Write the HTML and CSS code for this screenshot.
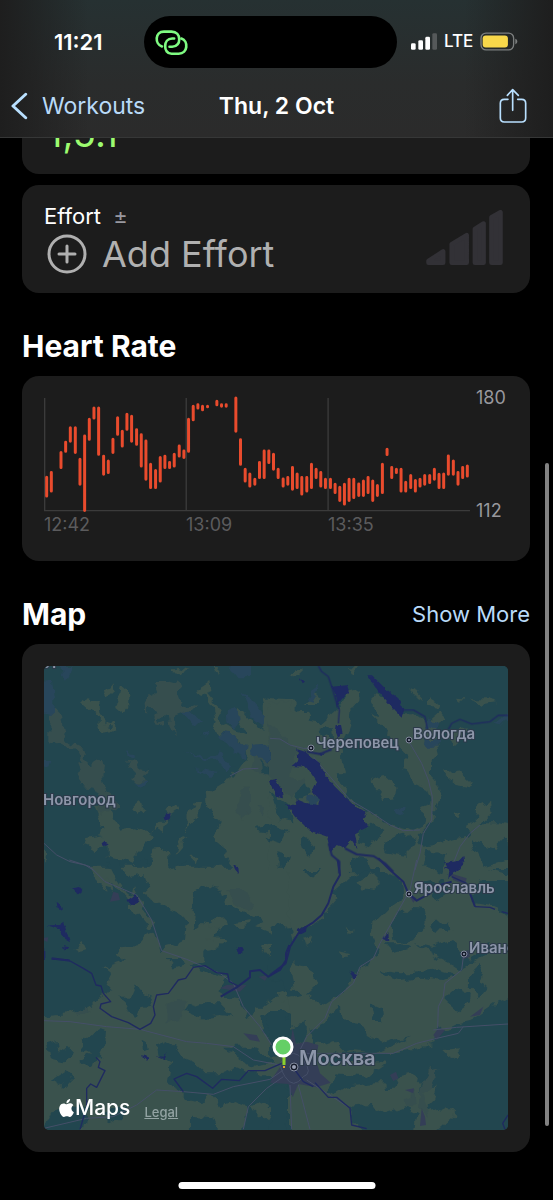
FILE: index.html
```
<!DOCTYPE html>
<html lang="en">

<head>
    <meta charset="UTF-8">
    <meta name="viewport" content="width=device-width, initial-scale=1.0">
    <title>Workout - Thu, 2 Oct</title>
    <link rel="stylesheet" href="styles.css">
</head>

<body>
    <header class="top-bar">
        <div class="status">
            <span class="clock">11:21</span>
            <div class="island">
                <svg class="link-icon" viewBox="466 84 100 80" aria-hidden="true">
                    <path d="M487 136C465 129 465 91 493 91H516C547 91 547 137 518 137H510" />
                    <path d="M524 112H518C490 112 490 158 516 158H538C566 158 568 119 546 112" />
                </svg>
            </div>
            <div class="signals">
                <svg class="bars-icon" viewBox="405 98 78 50" aria-hidden="true">
                    <rect x="405" y="128" width="14" height="20" rx="4" />
                    <rect x="427" y="119" width="14" height="29" rx="4" />
                    <rect x="448" y="109" width="14" height="39" rx="4" />
                    <rect class="off" x="469" y="98" width="14" height="50" rx="4" />
                </svg>
                <span class="lte">LTE</span>
                <svg class="battery-icon" viewBox="610 95 113 56" aria-hidden="true">
                    <rect class="shell" x="613" y="98" width="97" height="50" rx="15" />
                    <rect class="charge" x="618" y="105" width="75" height="36" rx="9" />
                    <path class="cap" d="M715 115C723 118 723 128 715 131Z" />
                </svg>
            </div>
        </div>
        <nav class="nav">
            <button class="back" type="button">
                <svg class="chevron" viewBox="34 278 52 84" aria-hidden="true">
                    <path d="M79 284L40 320L79 356" />
                </svg>
                Workouts
            </button>
            <h1 class="title">Thu, 2 Oct</h1>
            <button class="share" type="button" aria-label="Share">
                <svg class="share-icon" viewBox="670 264 84 108" aria-hidden="true">
                    <path d="M697 298H686Q674 298 674 310V354Q674 366 686 366H738Q750 366 750 354V310Q750 298 738 298H726M711 331V270M695 286L711 269L728 286" />
                </svg>
            </button>
        </nav>
    </header>

    <main class="content">
        <section class="card totals">
            <span class="total-value">1,5.1</span>
        </section>

        <section class="card effort">
            <div>
                <div class="effort-label">Effort <span class="plus-minus">±</span></div>
                <button class="add-effort" type="button">
                    <svg class="plus-icon" viewBox="0 0 40 40" aria-hidden="true">
                        <circle cx="20" cy="20" r="18" />
                        <path d="M20 12V28M12 20H28" />
                    </svg>
                    Add Effort
                </button>
            </div>
            <svg class="effort-icon" viewBox="450 89 231 166" aria-hidden="true">
                <path d="M457 243L501 214V248H457ZM527 192L572 165V248H527ZM597 146L623 130V248H597ZM647 111L674 96V248H647Z" />
            </svg>
        </section>

        <div class="heading">
            <h2>Heart Rate</h2>
        </div>
        <section class="card heart">
            <div class="plot">
                <svg class="chart" viewBox="71 63 1279 351" role="img" aria-label="Heart rate">
                    <path class="grid" d="M73 69V408M498 69V408M924 69V408M71 407H1350" />
                    <path class="beats" d="M79 307V363M93 293V348M122 233V278M136 202V229M150 158V199M165 158V233M179 253V328M193 183V407M207 133V193M221 99V129M235 99V238M250 244V298M264 258V293M278 193V233M292 128V178M306 169V213M320 118V163M334 124V199M349 164V208M363 179V273M377 198V313M391 268V338M406 287V338M420 248V318M434 244V278M448 263V278M462 238V273M477 213V243M491 228V248M505 133V229M519 94V134M533 89V99M547 94V104M562 94V95M590 79V89M604 89V94M618 89V94M647 69V169M661 194V268M675 283V318M689 297V333M704 313V328M718 263V308M732 228V308M746 228V263M760 238V283M774 283V308M789 312V333M803 308V328M817 278V343M831 297V338M845 308V357M860 308V348M874 268V338M888 283V308M902 293V333M916 313V338M931 313V338M945 328V353M959 337V377M973 328V387M987 313V377M1001 313V368M1016 327V362M1030 318V362M1044 308V353M1058 318V377M1072 332V362M1087 268V353M1101 223V239M1115 278V308M1129 283V293M1143 283V348M1157 322V348M1172 302V338M1186 317V348M1200 313V333M1214 302V328M1229 302V323M1243 283V313M1257 298V338M1271 297V338M1285 243V298M1300 258V298M1314 293V328M1328 278V308M1342 273V303" />
                </svg>
                <div class="times"><span>12:42</span><span>13:09</span><span>13:35</span></div>
            </div>
            <div class="range"><span>180</span><span>112</span></div>
        </section>

        <div class="heading">
            <h2>Map</h2>
            <a class="more" href="#map">Show More</a>
        </div>
        <section class="card map-card" id="map">
            <div class="map">
                <svg class="map-drawing" viewBox="0 0 464 464" role="img" aria-label="Workout map">
                    <defs>
                        <filter id="rough" x="0" y="0" width="100%" height="100%" color-interpolation-filters="sRGB">
                            <feTurbulence type="fractalNoise" baseFrequency=".1" numOctaves="2" seed="4" />
                            <feDisplacementMap in="SourceGraphic" scale="11" xChannelSelector="R" yChannelSelector="G" />
                        </filter>
                        <filter id="shore" x="0" y="0" width="100%" height="100%" color-interpolation-filters="sRGB">
                            <feTurbulence type="fractalNoise" baseFrequency=".2" numOctaves="2" seed="9" />
                            <feDisplacementMap in="SourceGraphic" scale="4" xChannelSelector="R" yChannelSelector="G" />
                        </filter>
                    </defs>

                    <!-- forest and fields -->
                    <g filter="url(#rough)">
                        <rect class="forest" x="-20" y="-20" width="504" height="504" />
                        <g transform="scale(.33333) translate(-72 582)">
                            <path class="field" d="M50 20H830V850H50Z" />
                            <path class="forest" d="M40 0H130L205 20 230 60 280 75 310 95 330 125V150L365 175 390 205 410 185 412 210 375 225 345 262 300 265 290 285 320 300 250 325 275 345 262 370 280 390 240 410 215 440 180 450 150 462 110 465 40 475ZM260 0H290L330 50 370 45 385 85 370 100 440 140 480 160 500 190 495 240 465 255 440 260 420 270 395 190 365 130 310 85 280 40ZM360 0L430 30 460 30 500 0ZM520 100L560 75 600 80 620 130 670 160 700 170 735 185 700 200 760 225 830 190V400L770 410 735 440 710 440 690 480 650 420 620 415 590 395 620 350 560 335 520 320 500 320 550 300V275L600 265 610 245 580 230 600 200 560 185 520 215 530 175 510 140ZM485 450L540 430 600 430 640 470 600 465 560 470 520 465ZM300 410H330L345 375 360 400 400 410 390 440 360 445 350 470 325 460 330 435ZM80 550L110 540 115 570 135 575 150 560 165 575 130 610 90 600ZM185 545L215 525 235 505 258 510 255 560 235 600 205 620 180 600 210 580 190 570ZM95 660L140 630 160 650 130 680ZM365 540L385 545 390 565 370 575ZM405 560L440 545 470 560 485 590 530 610 560 640 600 640 650 620 690 640 720 640 755 660V700L700 710 690 740 640 720 600 740 570 700 540 730 500 720 480 690 440 670 450 610 410 590ZM700 710L760 660 830 660V830H670L680 740ZM610 560L680 560 740 590 760 610 700 620 660 590ZM90 755L150 740 200 740 185 830H60ZM250 755L320 740 310 770 270 790ZM720 470L760 450 830 470V560H770L740 530ZM510 770L580 775 600 830H510ZM440 300L480 300 490 315 460 325Z" />
                            <path class="field" d="M250 60L270 70 280 95 245 85ZM160 265L190 248 200 270 185 275ZM345 75L355 95 335 105ZM560 190L610 175 625 185 600 215ZM640 190L690 180 670 205ZM720 255L780 240 800 300 750 290ZM690 740L730 720 760 750 740 780ZM560 240L600 232 580 250ZM770 700L800 710 790 750Z" />
                            <path class="meadow" d="M440 430L470 410 500 425 480 480 440 490ZM620 90L670 90 705 130 690 150 650 140ZM160 455L190 440 205 450 180 462Z" />
                        </g>
                        <g transform="scale(.33333) translate(678 582)">
                            <path class="field" d="M60 20H740V850H60Z" />
                            <path class="forest" d="M225 60L270 40 300 20 340 30 395 60 400 110 360 140 330 170 300 200 310 240 325 270 300 310 270 320 240 370 210 400 180 420 150 440 120 400 60 410 50 380 0 350V310L40 300 50 250 85 215 150 180 200 120 190 90 215 70ZM0 200L40 195 75 215 50 250 40 310 0 340ZM365 190L420 140 465 145 470 190 440 230 400 245 370 240ZM345 250L400 250 420 265 370 280ZM435 250L480 260 550 240 570 270 600 300 630 260 660 250 660 280 620 300 570 330 540 310 500 290ZM330 330L380 340 430 340 500 330 560 345 520 360 450 350 390 360 345 345ZM600 350L625 315 640 340 630 370 650 380 630 405 600 380ZM530 410L560 385 600 405 595 430 560 455 530 430ZM740 410L680 430 600 485 500 510V550L380 580 240 570 200 580 150 590 180 620 230 600 300 600 350 610 290 650 200 640 170 690 200 700 230 680 310 670 350 670V690H370L380 650 430 640 455 670 450 700 470 680 500 680 490 720 470 740 500 760 540 740 560 760 480 830H740ZM180 460L210 440 215 480 270 490 290 520 340 550 420 530 340 570 230 580 190 540 130 560 120 510 160 490ZM0 450L40 450 60 500 110 490 110 540 40 560 0 600ZM240 740L300 735 340 760 400 740 440 760 430 830H300L250 790ZM0 680L50 680 60 740 40 830H0ZM640 60L740 60V190L680 140 620 130 600 90ZM460 70L520 60 530 100 500 120 470 100ZM620 0H740V50L650 30ZM90 0L150 30 130 60 100 30ZM300 430L335 445 340 480 310 480ZM480 190L540 185 550 210 500 215Z" />
                            <path class="field" d="M265 65L310 40 330 60 310 90 275 85ZM230 195L255 210 240 222ZM60 310L110 320 145 370 100 410 70 380ZM20 400L50 390 55 420 30 430ZM520 570L575 565 560 600 540 590ZM160 120L190 110 180 140ZM90 240L130 230 120 260ZM200 270L240 280 220 300Z" />
                            <path class="meadow" d="M400 720L435 690 440 730 410 745ZM460 700L480 685 510 620 480 625 455 680 450 750 480 770Z" />
                        </g>
                        <g transform="scale(.33333) translate(-72 -228)">
                            <path class="field" d="M183 340L215 322 235 335 238 365 252 385 250 405 270 412 285 395 292 410 270 422 245 425 235 405 237 375 215 368ZM258 325L255 310 278 280 280 298 268 320ZM300 290L325 312V345L305 370 282 350 302 335 295 312ZM532 300L555 285 568 276 572 298 562 312 590 345 605 400 640 420 680 430 640 360 655 350 690 390 730 420 728 340 740 320 750 330 830 335V840H640L615 800 605 760 580 740 605 700 572 670 560 640 557 610 590 590 640 560 660 530 680 500 665 450 640 435 600 430 578 415 585 380 575 345 550 310ZM225 650L265 650 290 700 298 725 350 715 390 730 400 740 340 800 345 825 300 810 260 800V765L225 780 190 765 200 745 245 735 250 710ZM335 655L355 637 378 655 360 675ZM390 730L430 690 445 660 470 642 478 658 450 675 435 700 430 730 415 720ZM540 635L535 660 520 700 490 725 510 700 505 680 525 640ZM470 790L480 750 505 735 495 760 478 780ZM400 770L420 768 445 790V830L460 840H385ZM455 245L470 230 510 240 480 250ZM578 228H594L588 250ZM72 775L90 795 72 815ZM510 800L535 800 530 820Z" />
                            <path class="meadow" d="M377 340L382 322 415 308 405 282 440 282 465 265 483 295 472 318 485 355 510 350 525 345 535 355 515 368 490 365 465 375 462 400 470 430 460 425 450 385 430 378 410 382 415 400 435 395V405L415 408 402 390 410 362 390 355 378 368ZM88 375L105 355 122 372 130 430 150 455 185 475 200 512 215 525 235 512 255 525 250 560 260 605 285 620 295 650 265 670 235 670 240 625 220 590 185 585 175 585 185 550 175 525 190 520 175 485 120 460 88 450ZM320 515L350 520 360 535 382 540 368 560 375 575 350 575 340 565 350 545ZM670 590L690 590 690 640 670 685 652 665ZM700 500L810 420 830 560 760 560 690 540ZM710 650L735 655 725 685Z" />
                            <path class="forest" d="M720 515L775 545 775 560 730 545ZM705 710L760 705 740 730 710 725ZM735 745L830 715 830 770 780 765Z" />
                            <path class="marsh" d="M120 228H155L150 250 138 273 125 255ZM60 275L95 272 105 320 98 375 60 370ZM485 365L515 365 543 395 525 412ZM665 305L690 320 735 380 728 408 695 385ZM620 365L645 350 665 385 640 420 622 400ZM600 430L650 435 680 470 675 505 650 495 620 460ZM625 220L690 220V262L655 262ZM690 465L760 460 785 475 760 495 770 520 740 515 700 500ZM495 480L560 508 600 490 640 530 625 550 590 510 550 515ZM530 535L590 545 570 565ZM315 490L345 495 335 510ZM350 575L385 575 370 592ZM545 425L567 430 558 444ZM60 510L92 510 85 530 60 530Z" />
                        </g>
                        <g transform="scale(.33333) translate(678 -228)">
                            <path class="field" d="M0 340L55 340 70 365 120 362 110 395 150 400 195 360 215 335 240 300 270 292 268 330 245 355 240 400 225 445 205 470 228 550 200 550 240 630 290 660 350 700 430 720 470 700 455 650 485 640 475 600 430 580 400 540 410 490 370 450 340 410 300 370 325 380 300 330 320 310 390 370 430 370 470 400 510 365 520 380 500 410V450L510 490 480 520V560L515 600 495 650 490 690 440 740 460 770 520 760 590 740 630 700 690 700 740 710V840H0ZM295 570L340 555 380 590 375 625 340 630 325 600ZM515 545L560 540 605 580 600 592 560 585ZM590 710L620 690 625 650 660 636 665 665 640 690 600 730ZM410 292L440 305 463 330 430 315ZM480 325L505 340 500 355 480 350ZM600 325L650 325 675 340 640 345ZM545 660L578 670 570 688ZM62 250L95 235V262L70 262ZM105 345L130 310 150 320 135 345ZM238 235L262 235 250 255ZM558 320L580 322 570 340ZM535 420L600 415 580 440 550 470 535 440Z" />
                            <path class="forest" d="M0 600L60 650 70 700 30 690ZM100 740L130 760 120 800 90 770ZM260 720L310 700 340 720 300 770 265 760ZM340 750L420 730 440 760 400 800 350 790ZM470 780L530 790 520 850 460 830ZM600 750L680 780 700 740 740 800 640 830ZM0 700L50 720 30 760 0 750ZM60 590L100 580 130 600 90 630ZM150 420L185 410 190 450 160 440ZM240 800L300 810 310 850 240 850ZM20 790L60 800 50 830 20 830Z" />
                            <path class="marsh" d="M110 330L145 275 140 310 125 335ZM470 385L510 400 500 420 475 410ZM455 450L510 450 505 470 470 470ZM670 395L740 360V408ZM105 615L150 620 145 650 115 650ZM0 480L35 470 30 500 0 520ZM375 660L405 650 400 672Z" />
                            <path class="meadow" d="M0 400L80 480 60 560 100 570 60 630 0 560Z" />
                        </g>
                    </g>

                    <!-- towns and roads -->
                    <g class="city" transform="scale(.33333) translate(678 582)">
                        <path d="M10 650L45 600 60 555 68 505 78 552 110 545 145 555 138 600 150 640 182 668 140 682 85 672 68 712 55 672 0 668ZM360 645L378 635 385 655 370 663ZM405 690L432 685 430 700ZM455 745L465 770 468 795 450 798ZM490 525L505 505 525 510 500 540ZM410 95L440 115 430 128ZM540 40L590 55 585 75 550 60ZM570 280L595 270 600 290 580 298ZM600 470L640 440 630 465Z" />
                        <path d="M-70 375L-90 395 -150 385 -130 375ZM-80 520L-40 525 -30 545 -60 540ZM-35 350L-5 345 -15 362ZM-470 95L-455 100 -450 120 -480 125ZM-690 235L-665 232 -668 246Z" />
                    </g>
                    <g class="roads">
                        <path transform="scale(.33333) translate(-72 -228)" d="M72 760L110 795 150 815 195 825 220 840M630 558L670 537 715 535" />
                        <path transform="scale(.33333) translate(678 -228)" d="M420 460L455 520 475 570 487 620 485 690 460 730 450 790 435 840M130 500L180 560 240 630 300 665 360 705 400 722 450 720M0 445L30 447 60 465 100 475H125M550 820L570 770 600 730 630 705" />
                        <path transform="scale(.33333) translate(-72 582)" d="M148 0L210 20 255 65 350 105 395 180 425 272 500 298 600 340 640 370 670 440 720 500 755 555M72 482L150 485 260 500 360 508 500 545 560 550 640 560 700 600 780 615M72 805L200 775 280 770 350 735 410 690 490 695 580 703 640 680 750 658 790 630M670 808L685 740 740 685 790 650" />
                        <path transform="scale(.33333) translate(678 582)" d="M440 0L420 90 375 170 330 250 310 295 270 320 250 370 185 425 165 475 110 530 90 570M580 290L575 330 525 370 520 410 505 440 503 505M110 580H370L440 550 500 535 565 520 580 500M490 510L560 502 714 492M60 675L65 808M85 675L120 808M110 660L240 745M40 600Q70 560 100 600T100 650Q70 690 45 650T40 600" />
                    </g>

                    <!-- lakes and rivers -->
                    <g class="lakes" filter="url(#shore)">
                        <path transform="scale(.33333) translate(-72 -228)" d="M750 570L765 568 785 600 788 625 770 620 765 600 755 590ZM440 668H452L450 685 440 695 433 682ZM245 760L255 752 263 766 248 768Z" />
                        <path transform="scale(.33333) translate(678 -228)" d="M82 478L105 485 150 520 165 555 195 590 245 640 290 668 278 685 295 710 255 730 262 775 245 750 225 775 200 765 180 790 172 740 120 722 75 680 45 640 75 645 80 628 110 640 145 645 150 625 125 610 140 575 110 530 65 528 85 510ZM185 290L230 286 237 305 212 335 200 350 195 310ZM292 256H306L345 295 385 325 402 362 395 380 370 355 320 298ZM200 405H210L215 430 205 445 197 425ZM88 260L105 275 98 280ZM0 570L20 575 35 600 38 625 15 605ZM145 490L165 487 155 497ZM525 832L560 820 580 798 583 815 560 850Z" />
                        <path transform="scale(.33333) translate(-72 582)" d="M160 85L180 80 187 90 172 103ZM110 125L128 140V150L112 140ZM82 196L120 195 130 185 140 215 150 247 130 235 118 208ZM125 258L145 262 135 272ZM60 258L76 268V300H60ZM323 120L345 105 358 125 332 137ZM648 270L665 257 672 270 658 282ZM365 586L387 592 380 605ZM405 588L430 590 440 580 435 597ZM640 15L655 22 657 42 645 28Z" />
                        <path transform="scale(.33333) translate(678 582)" d="M525 10L580 0 578 15 555 35 535 55 538 30ZM333 235L355 220 358 245ZM238 335L262 345 252 357ZM80 210L110 200 108 215 88 225Z" />
                    </g>
                    <g class="rivers">
                        <path transform="scale(.33333) translate(678 -228)" d="M145 228L155 245 175 260 185 290 200 340 208 360 205 400M400 360L430 360 465 380 472 418M535 418L545 400 570 388 605 402 660 395 685 376H714" />
                        <path class="wide" transform="scale(.33333) translate(678 -228)" d="M225 775L260 793 310 798 345 820 370 845M176 760L185 795 208 815V850M110 485L150 492 185 478" />
                        <path transform="scale(.33333) translate(-72 582)" d="M95 297L145 300 190 325 215 340 228 375 243 378 250 400 272 425 243 432 240 445 275 470 325 488 360 508 392 490 405 465 400 440 410 405 445 400 475 360 497 355 520 322 555 317 590 338 623 342 628 365 655 378M228 592L240 605 235 622 255 632 230 682 212 672 200 685V740L180 808M490 695L462 657 500 640 530 650 578 685 605 658 658 662 685 632 735 632 785 610" />
                        <path class="wide" transform="scale(.33333) translate(-72 582)" d="M602 410L650 382 690 352V334L720 330 745 350 780 330 798 300V280L808 255M95 295L150 302" />
                        <path class="wide" transform="scale(.33333) translate(678 582)" d="M325 -5L360 30 400 65 415 100 440 122 480 100 510 75 545 65M203 0L210 45 190 80 175 130 155 165 130 187 90 212 60 260 47 310 0 345M600 100L615 140" />
                        <path transform="scale(.33333) translate(678 582)" d="M545 50L590 70 600 100M615 140L660 142 675 148M695 155L714 160M75 630L100 665 130 680M135 668L175 712 200 712 240 745 245 795 290 806M714 765L698 790 705 808" />
                    </g>

                    <path class="route" d="M240 388V399" />
                    <path class="route start" d="M239 401H241" />
                    <circle class="pin" cx="239" cy="381" r="9" />

                    <g class="dots">
                        <circle cx="267" cy="82" r="3" />
                        <circle cx="365" cy="74" r="3" />
                        <circle cx="365" cy="228" r="3" />
                        <circle cx="420" cy="288" r="3" />
                        <circle cx="250" cy="401" r="4" />
                    </g>
                    <g class="dot-centers">
                        <circle cx="267" cy="82" r="1" />
                        <circle cx="365" cy="74" r="1" />
                        <circle cx="365" cy="228" r="1" />
                        <circle cx="420" cy="288" r="1" />
                        <circle cx="250" cy="401" r="2" />
                    </g>
                    <g class="places">
                        <text x="-1" y="139">Новгород</text>
                        <text x="272" y="82">Череповец</text>
                        <text x="369" y="73">Вологда</text>
                        <text x="370" y="227">Ярославль</text>
                        <text x="425" y="287">Иваново</text>
                        <text class="capital" x="255" y="399">Москва</text>
                        <text x="1" y="2">Л</text>
                    </g>
                </svg>
                <div class="credits">
                    <span class="brand">
                        <svg class="apple" viewBox="2 0 20 24" aria-hidden="true">
                            <path d="M12.152 6.896c-.948 0-2.415-1.078-3.96-1.04-2.04.027-3.91 1.183-4.961 3.014-2.117 3.675-.546 9.103 1.519 12.09 1.013 1.454 2.208 3.09 3.792 3.039 1.52-.065 2.09-.987 3.935-.987 1.831 0 2.35.987 3.96.948 1.637-.026 2.676-1.48 3.676-2.948 1.156-1.688 1.636-3.325 1.662-3.415-.039-.013-3.182-1.221-3.22-4.857-.026-3.04 2.48-4.494 2.597-4.559-1.429-2.09-3.623-2.324-4.39-2.376-2-.156-3.675 1.09-4.61 1.09zM15.53 3.83c.843-1.012 1.4-2.427 1.245-3.83-1.207.052-2.662.805-3.532 1.818-.78.896-1.454 2.338-1.273 3.714 1.338.104 2.715-.688 3.559-1.701" />
                        </svg>Maps</span>
                    <a class="legal" href="#legal">Legal</a>
                </div>
            </div>
        </section>
    </main>

    <div class="scrollbar"></div>
    <div class="home-indicator"></div>
</body>

</html>
```
FILE: styles.css
```
* {
    box-sizing: border-box;
}

body {
    margin: 0;
    min-height: 100vh;
    background: #000;
    color: #fff;
    font-family: Inter, "Liberation Sans", sans-serif;
    font-size: 22px;
}

h1,
h2 {
    margin: 0;
}

button {
    padding: 0;
    border: 0;
    background: none;
    font: inherit;
    cursor: pointer;
}

svg {
    display: block;
    flex: none;
}

/* top bar */
.top-bar {
    position: sticky;
    top: 0;
    z-index: 2;
    padding-top: 16px;
    border-bottom: 1px solid #363737;
    background:
        linear-gradient(90deg, #1e1e1e, #1e1e1e00 16%, #1e1e1e00 84%, #1e1e1e),
        linear-gradient(#263132, #2a2c2c 60%, #2b2b2b);
}

.status {
    display: grid;
    grid-template-columns: 144px 1fr 156px;
    align-items: center;
}

.clock {
    padding-left: 54px;
    font-weight: 600;
}

.island {
    display: flex;
    align-items: center;
    height: 52px;
    padding-left: 11px;
    border-radius: 26px;
    background: #000;
}

.link-icon {
    width: 33px;
    height: 27px;
    fill: none;
    stroke: #7ffb82;
    stroke-width: 8;
    stroke-linecap: round;
}

.signals {
    display: flex;
    align-items: center;
    gap: 7px;
    padding: 0 0 2px 14px;
}

.bars-icon {
    width: 26px;
    height: 17px;
    fill: #fff;
}

.bars-icon .off {
    fill: #55595a;
}

.lte {
    font-size: 17px;
    font-weight: 500;
}

.battery-icon {
    width: 38px;
    height: 19px;
}

.shell {
    fill: none;
    stroke: #7b7e7e;
    stroke-width: 4;
}

.charge {
    fill: #f8d84a;
}

.cap {
    fill: #7b7e7e;
}

.nav {
    display: grid;
    grid-template-columns: 1fr auto 1fr;
    align-items: center;
    height: 69px;
    padding: 6px 26px 0 11px;
    font-size: 23px;
}

.back {
    display: flex;
    align-items: center;
    gap: 14px;
    color: #b9daf8;
}

.chevron {
    width: 17px;
    height: 28px;
    fill: none;
    stroke: #b9e0ff;
    stroke-width: 9;
    stroke-linecap: round;
    stroke-linejoin: round;
}

.title {
    padding-left: 15px;
    font-size: 23px;
    font-weight: 600;
}

.share {
    justify-self: end;
}

.share-icon {
    width: 28px;
    height: 36px;
    fill: none;
    stroke: #b9e0ff;
    stroke-width: 5;
    stroke-linecap: round;
    stroke-linejoin: round;
}

/* cards */
.content {
    padding: 0 23px 48px 22px;
}

.card {
    border-radius: 17px;
    background: #1c1c1c;
}

/* scrolled half way under the top bar */
.totals {
    display: flex;
    align-items: flex-end;
    height: 108px;
    margin-top: -72px;
    padding: 0 25px 22px;
}

.total-value {
    color: #9dfb70;
    font-size: 38px;
    line-height: 38px;
}

.effort {
    display: flex;
    justify-content: space-between;
    align-items: flex-start;
    height: 108px;
    margin-top: 11px;
    padding: 17px 27px 0 22px;
}

.effort-label {
    line-height: 28px;
}

.plus-minus {
    margin-left: 6px;
    color: #98989f;
}

.add-effort {
    display: flex;
    align-items: center;
    gap: 15px;
    padding-left: 3px;
    color: #b0b0b0;
    font-size: 36px;
    line-height: 48px;
    font-variant-ligatures: none;
}

.plus-icon {
    width: 40px;
    height: 40px;
    fill: none;
    stroke: #b0b0b0;
    stroke-width: 3;
    stroke-linecap: round;
}

.effort-icon {
    width: 77px;
    height: 55px;
    margin-top: 8px;
    fill: #323136;
    stroke: #323136;
    stroke-width: 14;
    stroke-linejoin: round;
}

.heading {
    display: flex;
    justify-content: space-between;
    align-items: center;
    height: 83px;
    padding-top: 22px;
}

.heading h2 {
    font-size: 30px;
    font-weight: 700;
}

.more {
    color: #b9daf8;
    text-decoration: none;
}

/* heart rate */
.heart {
    display: flex;
    gap: 6px;
    height: 185px;
    padding: 20px 22px 0;
}

.plot {
    flex: 1;
}

.chart {
    width: 100%;
}

.grid {
    fill: none;
    stroke: #3b3b3b;
    stroke-width: 4;
}

.beats {
    fill: none;
    stroke: #e94b2d;
    stroke-width: 9;
    stroke-linecap: round;
}

.times {
    display: grid;
    grid-template-columns: repeat(3, 1fr);
    color: #5b5b5d;
    font-size: 18px;
    line-height: 24px;
}

.range {
    display: flex;
    flex-direction: column;
    justify-content: space-between;
    width: 32px;
    height: 137px;
    margin-top: -10px;
    color: #98989d;
    font-size: 18px;
    line-height: 24px;
}

/* map */
.map-card {
    padding: 22px;
}

.map {
    position: relative;
    overflow: hidden;
    border-radius: 5px;
}

.map-drawing {
    width: 100%;
    background: #22464f;
}

.forest {
    fill: #22464f;
}

.field {
    fill: #3a524d;
}

.meadow {
    fill: #364e4e;
}

.marsh {
    fill: #28465b;
}

.city {
    fill: #343e57;
}

.lakes {
    fill: #1e2a61;
}

.rivers {
    fill: none;
    stroke: #1f2a60;
    stroke-width: 4;
    stroke-linejoin: round;
}

.wide {
    stroke-width: 6;
}

.roads {
    fill: none;
    stroke: #454f68;
    stroke-width: 3;
    stroke-linejoin: round;
}

.route {
    stroke: #8bd02f;
    stroke-width: 3;
}

.start {
    stroke: #e0a030;
    stroke-width: 2;
}

.pin {
    fill: #65cf66;
    stroke: #fff;
    stroke-width: 3;
}

.dots {
    fill: #161c2c;
    stroke: #7f879a;
    stroke-width: 1;
}

.dot-centers {
    fill: #9aa0b5;
}

.places {
    fill: #8d96a9;
    stroke: #2c3a4a;
    stroke-width: 2;
    paint-order: stroke;
    font-size: 15px;
    font-weight: 600;
}

.capital {
    font-size: 20px;
}

.credits {
    position: absolute;
    left: 15px;
    bottom: 10px;
    display: flex;
    align-items: baseline;
    gap: 14px;
}

.brand {
    display: flex;
    align-items: center;
    gap: 1px;
    font-size: 21px;
    font-weight: 500;
}

.apple {
    width: 15px;
    height: 18px;
    fill: #fff;
}

.legal {
    color: #93a3a3;
    font-size: 13px;
    font-weight: 500;
}

/* system overlays */
.scrollbar {
    position: fixed;
    top: 463px;
    right: 4px;
    bottom: 74px;
    width: 4px;
    border-radius: 2px;
    background: #828282;
}

.home-indicator {
    position: fixed;
    bottom: 11px;
    left: 50%;
    width: 197px;
    height: 7px;
    border-radius: 4px;
    background: #fff;
    transform: translateX(-50%);
}
```
